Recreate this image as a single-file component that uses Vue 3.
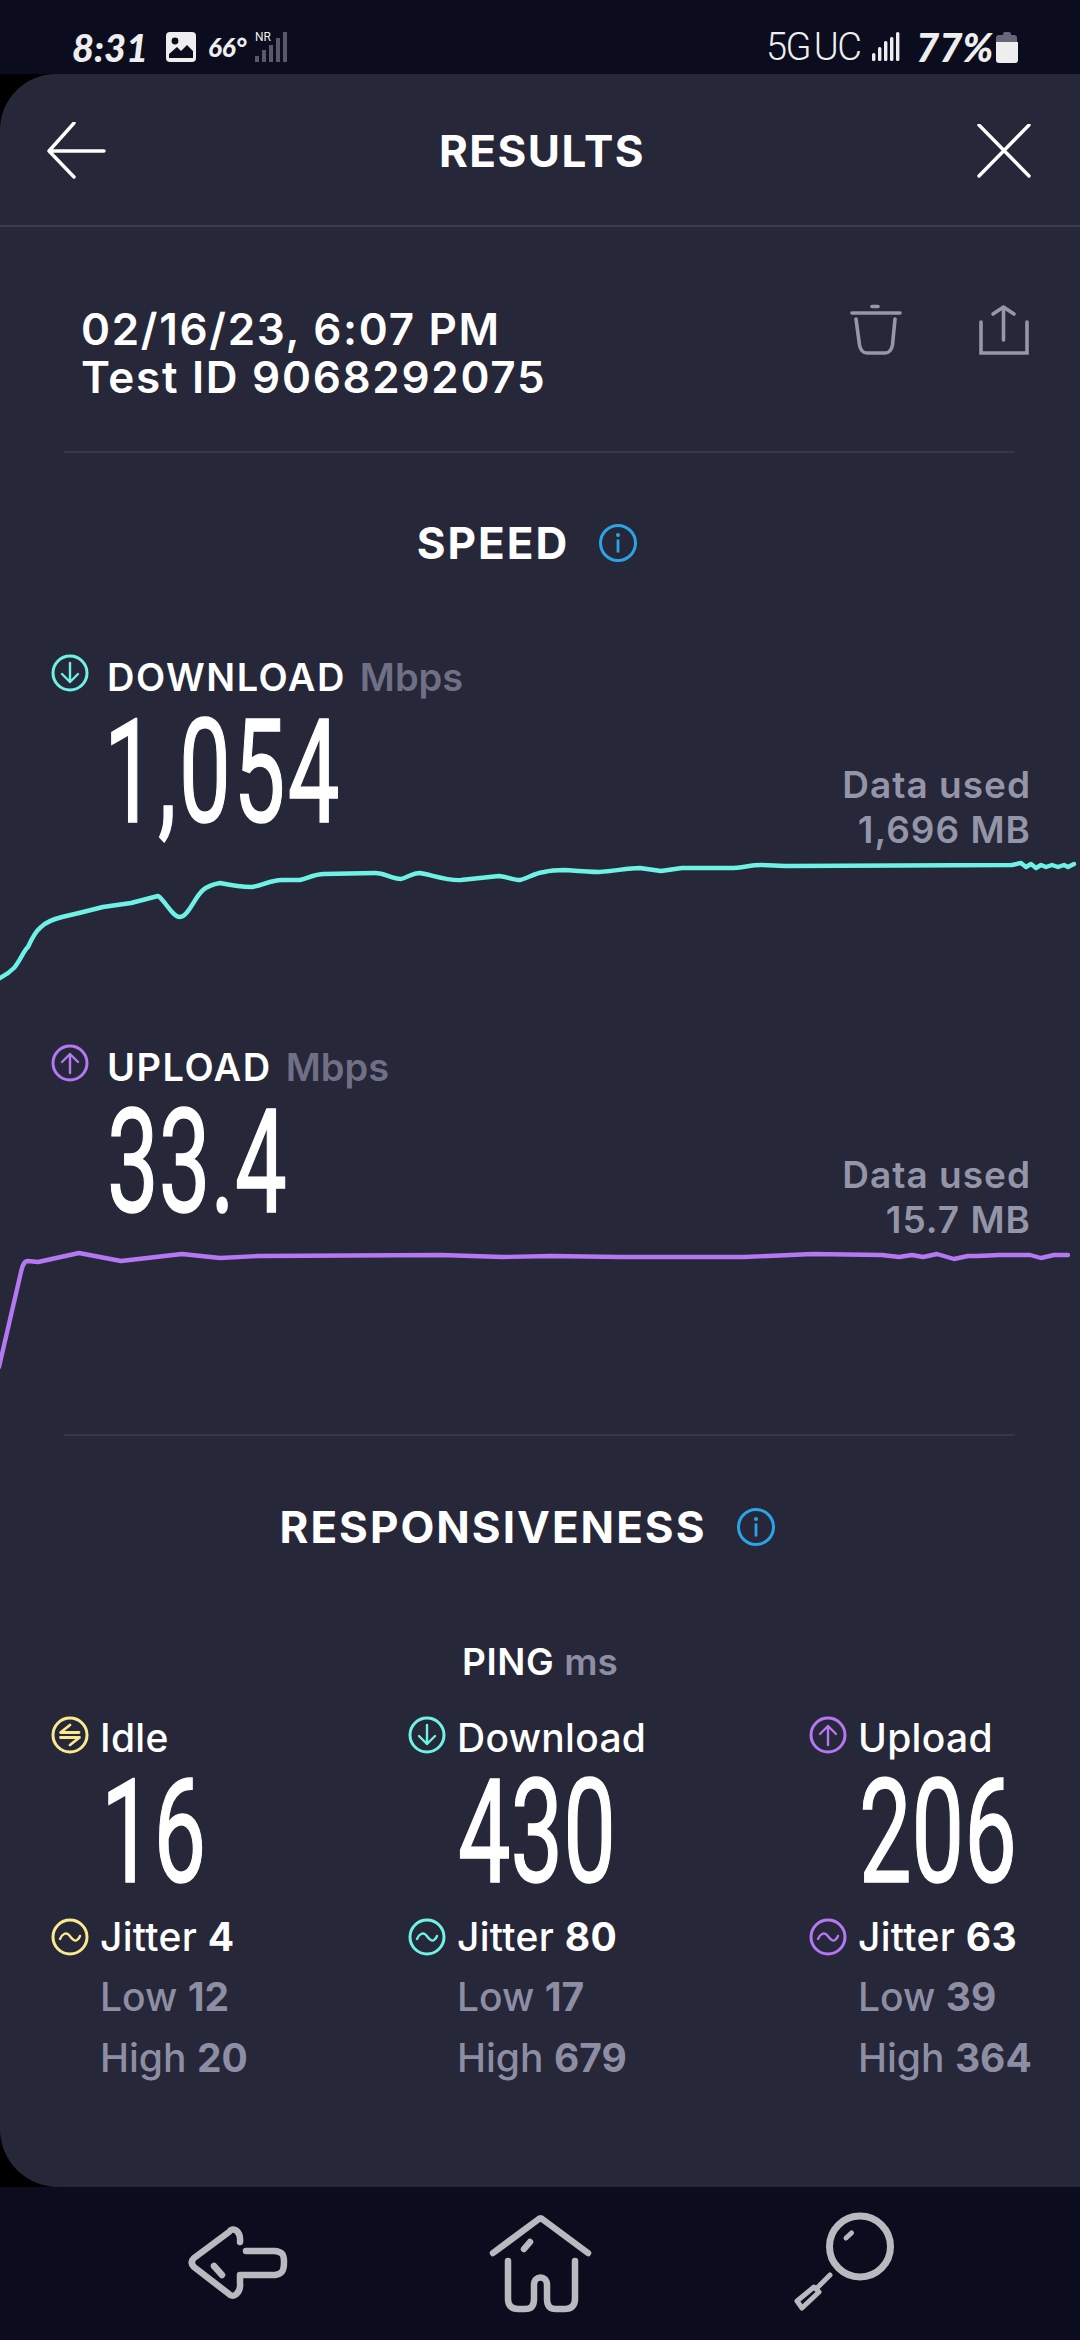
<script setup>
const columns = [
  { id: 'idle', label: 'Idle', value: '16', jitter: '4', low: '12', high: '20', color: '#fbe98f', kind: 'idle' },
  { id: 'down', label: 'Download', value: '430', jitter: '80', low: '17', high: '679', color: '#6ff2e6', kind: 'down' },
  { id: 'up', label: 'Upload', value: '206', jitter: '63', low: '39', high: '364', color: '#b577f2', kind: 'up' }
]
const downloadLine = 'M-2 979 L0 978 C6 975 10 972 14 968 C20 961 24 950 28 947 C32 938 36 931 41 927 C47 921 54 919 62 917 L79 913 L103 907 L131 903 L158 896 C165 900 172 917 180 917 C188 917 194 898 203 890 C208 886 214 884 220 883 C230 885 240 887 251 887 C262 886 270 880 282 880 L300 880 C308 878 315 874 324 874 L375 873 C385 873 392 879 401 879 C408 877 413 873 420 873 C432 875 448 881 461 880 L499 876 C508 877 514 880 520 880 C528 878 535 873 544 872 C552 870 558 870 565 870 C578 871 590 872 599 872 C615 871 628 868 640 868 L661 871 L682 868 L730 868 C742 868 750 865 761 865 L785 866 L1012 865 L1021 863 L1026 867 L1031 864 L1036 868 L1041 865 L1046 867 L1052 865 L1058 867 L1064 865 L1068 867 L1074 864'
const uploadLine = 'M-1 1367 L21 1272 C23 1263 25 1261 28 1261 L38 1262 L79 1253 L121 1261 L182 1254 L220 1258 L258 1256 L441 1255 L503 1257 L551 1256 L620 1257 L744 1257 L813 1254 L882 1255 L899 1257 L912 1255 L923 1257 L937 1254 L954 1259 L968 1256 L978 1256 L999 1255 L1030 1255 L1041 1258 L1054 1255 L1068 1255'
</script>

<template>
  <div class="page">
    <header class="status">
      <div class="status-left">
        <span class="clock">8:31</span>
        <svg class="photo" viewBox="0 0 30 30" width="30" height="30">
          <rect width="30" height="30" rx="4" fill="#eeeeef" />
          <circle cx="9" cy="9" r="3.4" fill="#0b0c1d" />
          <path d="M3 26 V22 L11 15 L15 19 L21 13 L27 19 V26 Z" fill="#0b0c1d" />
        </svg>
        <span class="temp">66°</span>
        <div class="nr">
          <span class="nr-label">NR</span>
          <svg width="36" height="30" viewBox="0 0 36 30">
            <g fill="#57586a">
              <rect x="0" y="24" width="4" height="6" />
              <rect x="7" y="18" width="4" height="12" />
              <rect x="14" y="13" width="4" height="17" />
              <rect x="21" y="6" width="4" height="24" />
              <rect x="28" y="0" width="4" height="30" />
            </g>
          </svg>
        </div>
      </div>
      <div class="status-right">
        <span class="net">5G UC</span>
        <svg class="bars" width="28" height="30" viewBox="0 0 28 30">
          <g fill="#eeeeef">
            <rect x="0" y="21" width="3.4" height="8" rx="1.5" />
            <rect x="6" y="15" width="3.4" height="14" rx="1.5" />
            <rect x="12" y="9" width="3.4" height="20" rx="1.5" />
            <rect x="18" y="5" width="3.4" height="24" rx="1.5" />
            <rect x="24" y="0" width="3.4" height="29" rx="1.5" />
          </g>
        </svg>
        <span class="pct">77%</span>
        <svg width="22" height="33" viewBox="0 0 22 33">
          <path d="M7 3 a2 2 0 0 1 2 -2 h4 a2 2 0 0 1 2 2 V4 h3 a3 3 0 0 1 3 3 V11 H0 V7 a3 3 0 0 1 3 -3 h4 Z" fill="#66677a" />
          <path d="M0 11 H22 V29 a3 3 0 0 1 -3 3 H3 a3 3 0 0 1 -3 -3 Z" fill="#eeeeef" />
        </svg>
      </div>
    </header>

    <div class="backdrop">
      <main class="card">
        <div class="topbar">
          <svg width="60" height="58" viewBox="0 0 60 58" class="topbar-icon">
            <path d="M27 1 L2 29 L27 55 M2 29 H57" fill="none" stroke="#fff" stroke-width="3.4" stroke-linecap="round" stroke-linejoin="round" />
          </svg>
          <h1 class="title">RESULTS</h1>
          <svg width="54" height="54" viewBox="0 0 54 54" class="topbar-icon">
            <path d="M2 1 L52 52 M52 1 L2 52" fill="none" stroke="#fff" stroke-width="3.4" stroke-linecap="round" />
          </svg>
        </div>

        <section class="meta">
          <div class="meta-text">
            <div>02/16/23, 6:07 PM</div>
            <div>Test ID 9068292075</div>
          </div>
          <div class="meta-actions">
            <svg width="52" height="54" viewBox="0 0 52 54">
              <g fill="none" stroke="#9697ab" stroke-width="3.6" stroke-linecap="round">
                <path d="M2 9 H50" />
                <path d="M22 2.5 H28" />
                <path d="M6 15 L9.5 41 C10.5 46 13 49 17 49 H35 C39 49 41.5 46 42.5 41 L45 15" />
              </g>
            </svg>
            <svg width="52" height="54" viewBox="0 0 52 54">
              <g fill="none" stroke="#9697ab" stroke-width="3.6" stroke-linecap="round">
                <path d="M3 18 V49 H49 V18" stroke-linejoin="miter" />
                <path d="M25.5 36 V3 M15 10 L25.5 3 L36 10" stroke-linejoin="round" />
              </g>
            </svg>
          </div>
        </section>

        <div class="rule"></div>

        <h2 class="section-title speed-title">
          <span>SPEED</span>
          <svg class="info" width="40" height="40" viewBox="0 0 40 40">
            <circle cx="20" cy="20" r="17.5" fill="none" stroke="#2aa4e6" stroke-width="3" />
            <rect x="18.6" y="16.5" width="2.8" height="13" fill="#2aa4e6" />
            <circle cx="20" cy="12" r="2" fill="#2aa4e6" />
          </svg>
        </h2>

        <section class="metric download">
          <div class="metric-head">
            <svg class="ring" width="38" height="38" viewBox="0 0 38 38">
              <g fill="none" stroke="#6ff2e6" stroke-linecap="round" stroke-linejoin="round">
                <circle cx="19" cy="19" r="17" stroke-width="3" />
                <path d="M19 9 V28 M11 20 L19 28 L27 20" stroke-width="2.4" />
              </g>
            </svg>
            <span class="metric-name">DOWNLOAD</span>
            <span class="metric-unit">Mbps</span>
          </div>
          <div class="metric-main">
            <span class="big big-metric">1,054</span>
            <div class="used"><div>Data used</div><div>1,696 MB</div></div>
          </div>
          <svg class="chart" width="1080" height="140" viewBox="0 850 1080 140">
            <path :d="downloadLine" fill="none" stroke="#6ff2e6" stroke-width="4.4" stroke-linejoin="round" stroke-linecap="round" />
          </svg>
        </section>

        <section class="metric upload">
          <div class="metric-head">
            <svg class="ring" width="38" height="38" viewBox="0 0 38 38">
              <g fill="none" stroke="#b577f2" stroke-linecap="round" stroke-linejoin="round">
                <circle cx="19" cy="19" r="17" stroke-width="3" />
                <path d="M19 29 V10 M11 18 L19 10 L27 18" stroke-width="2.4" />
              </g>
            </svg>
            <span class="metric-name">UPLOAD</span>
            <span class="metric-unit">Mbps</span>
          </div>
          <div class="metric-main">
            <span class="big big-metric">33.4</span>
            <div class="used"><div>Data used</div><div>15.7 MB</div></div>
          </div>
          <svg class="chart" width="1080" height="130" viewBox="0 1240 1080 130">
            <path :d="uploadLine" fill="none" stroke="#b577f2" stroke-width="4.4" stroke-linejoin="round" stroke-linecap="round" />
          </svg>
        </section>

        <div class="rule rule-two"></div>

        <h2 class="section-title resp-title">
          <span>RESPONSIVENESS</span>
          <svg class="info" width="40" height="40" viewBox="0 0 40 40">
            <circle cx="20" cy="20" r="17.5" fill="none" stroke="#2aa4e6" stroke-width="3" />
            <rect x="18.6" y="16.5" width="2.8" height="13" fill="#2aa4e6" />
            <circle cx="20" cy="12" r="2" fill="#2aa4e6" />
          </svg>
        </h2>

        <div class="ping-title">PING <span class="ping-unit">ms</span></div>

        <section class="ping">
          <div v-for="c in columns" :key="c.id" class="ping-col" :class="'col-' + c.id">
            <div class="ping-row">
              <svg class="ring" width="38" height="38" viewBox="0 0 38 38">
                <g fill="none" :stroke="c.color" stroke-linecap="round" stroke-linejoin="round">
                  <circle cx="19" cy="19" r="17" stroke-width="3" />
                  <path v-if="c.kind === 'idle'" d="M28 16.5 H9.5 L19 9 M9.5 21.5 H28.5 L19 29" stroke-width="2.8" />
                  <path v-else-if="c.kind === 'down'" d="M19 9 V28 M11 20 L19 28 L27 20" stroke-width="2.4" />
                  <path v-else d="M19 29 V10 M11 18 L19 10 L27 18" stroke-width="2.4" />
                </g>
              </svg>
              <span class="ping-label">{{ c.label }}</span>
            </div>
            <div class="big big-ping">{{ c.value }}</div>
            <div class="ping-row jitter">
              <svg class="ring" width="38" height="38" viewBox="0 0 38 38">
                <g fill="none" :stroke="c.color" stroke-linecap="round">
                  <circle cx="19" cy="19" r="17" stroke-width="3" />
                  <path d="M9 21 C11 16 15 14 18 17 C21 21 24 24 26 22 C27.5 21 28.5 19.5 29 18" stroke-width="2.4" />
                </g>
              </svg>
              <span class="ping-label">Jitter <b>{{ c.jitter }}</b></span>
            </div>
            <div class="stat">Low <b>{{ c.low }}</b></div>
            <div class="stat stat-high">High <b>{{ c.high }}</b></div>
          </div>
        </section>
      </main>
    </div>

    <nav class="nav">
      <svg width="110" height="110" viewBox="0 -6 110 110">
        <g fill="none" stroke="#b9bac0" stroke-width="6.5" stroke-linecap="round" stroke-linejoin="round">
          <path d="M55 29 C56 18 48 13 44 19 L9 45 C6 48 6 51 9 54 L44 81 C48 86 56 80 55 70 V62 H90 C97 61 99 58 99 49 C99 41 97 39 90 38 H61" />
          <path d="M29 53 L37 62" />
        </g>
      </svg>
      <svg width="110" height="110" viewBox="0 -6 110 110">
        <g fill="none" stroke="#b9bac0" stroke-width="6.5" stroke-linecap="round" stroke-linejoin="round">
          <path d="M8 40 L52.5 7 Q55.5 4 58.5 7 L103 40" />
          <path d="M23 48 V86 C23 93 27 96 33 96 H40 C46 96 49 93 49 86 V72 C49 62 62 62 62 72 V86 C62 93 65 96 71 96 H80 C86 96 90 93 90 86 V48" />
          <path d="M39 36 L45 29" />
        </g>
      </svg>
      <svg width="110" height="110" viewBox="0 -6 110 110">
        <g fill="none" stroke="#b9bac0" stroke-width="7" stroke-linecap="round" stroke-linejoin="round">
          <circle cx="75" cy="33.5" r="30.5" />
          <path d="M45 62 L33 74" stroke-width="5" />
          <path d="M29 74 L12 88 L17 95 L34 79 Z" stroke-width="5" />
          <path d="M61 25 L66.5 20" stroke-width="5" />
        </g>
      </svg>
    </nav>
  </div>
</template>

<style>
html, body { margin: 0; background: #0b0c1d; }
</style>

<style scoped>
.page {
  width: 1080px;
  height: 2340px;
  background: #0b0c1d;
  color: #fff;
  font-family: Inter, "Liberation Sans", sans-serif;
  overflow: hidden;
  display: flex;
  flex-direction: column;
}
.status {
  height: 74px;
  flex: none;
  box-sizing: border-box;
  padding: 30px 62px 0 72px;
  display: flex;
  justify-content: space-between;
  align-items: flex-start;
  color: #eeeeef;
}
.status-left, .status-right { display: flex; align-items: center; height: 34px; }
.clock { font: italic 900 38px/34px Lato, sans-serif; width: 94px; }
.temp { font: italic 900 26px/34px Lato, sans-serif; margin-left: 12px; width: 47px; }
.nr { position: relative; width: 36px; height: 30px; }
.nr-label { position: absolute; left: 0; top: -1px; font: 400 12px/12px Roboto, sans-serif; color: #eeeeef; z-index: 1; background: #0b0c1d; padding-right: 1px; }
.net { font: 300 38px/34px Roboto, sans-serif; width: 106px; letter-spacing: -1.5px; word-spacing: -4px; white-space: nowrap; }
.pct { font: italic 900 40px/34px Lato, sans-serif; margin-left: 16px; width: 80px; }
.backdrop { background: #000; flex: none; }
.card {
  height: 2113px;
  box-sizing: border-box;
  background: #262739;
  border-radius: 56px 0 0 58px;
  overflow: hidden;
}
.topbar {
  height: 153px;
  box-sizing: border-box;
  border-bottom: 2px solid #3b3c4e;
  padding: 2px 49px 0 47px;
  display: flex;
  align-items: center;
  justify-content: space-between;
}
.title { margin: 0; font-size: 44px; line-height: 50px; font-weight: 700; letter-spacing: 1.5px; }
.meta {
  display: flex;
  justify-content: space-between;
  padding: 78px 50px 0 81px;
}
.meta-text { font-size: 44px; line-height: 48px; font-weight: 600; letter-spacing: 1.7px; }
.meta-actions { display: flex; gap: 76px; margin-top: -1px; }
.rule { height: 2px; margin: 50px 65px 0 64px; background: #353648; }
.section-title {
  margin: 0;
  padding-right: 25px;
  font-size: 44px;
  line-height: 50px;
  font-weight: 700;
  letter-spacing: 2px;
  display: flex;
  justify-content: center;
  align-items: center;
  gap: 29px;
}
.speed-title { margin-top: 65px; }
.info { flex: none; }
.metric-head { display: flex; align-items: flex-start; padding-left: 51px; height: 44px; }
.ring { flex: none; }
.metric-name { margin-left: 18px; margin-top: 3px; font-size: 38px; line-height: 40px; font-weight: 600; letter-spacing: 1.5px; }
.metric-unit { margin-left: 14px; margin-top: 3px; font-size: 38px; line-height: 40px; font-weight: 600; color: #6f7085; }
.download { margin-top: 86px; }
.upload { margin-top: 54px; }
.metric-main { display: flex; justify-content: space-between; padding: 10px 49px 0 107px; height: 152px; box-sizing: border-box; }
.big {
  font-family: Roboto, sans-serif;
  font-weight: 400;
  -webkit-text-stroke: 1.5px #fff;
  display: inline-block;
  transform: scaleX(0.64);
  transform-origin: left center;
  white-space: nowrap;
}
.big-metric { font-size: 144px; line-height: 130px; height: 130px; }
.download .big-metric { letter-spacing: 4px; margin-left: -3px; }
.used { text-align: right; font-size: 37px; line-height: 45px; font-weight: 600; letter-spacing: 1px; color: #9495a8; padding-top: 54px; }
.chart { display: block; }
.rule-two { margin-top: 64px; }
.resp-title { margin-top: 66px; }
.ping-title { margin-top: 90px; text-align: center; font-size: 37px; line-height: 40px; font-weight: 600; letter-spacing: 0.6px; }
.ping-unit { color: #8d8ea3; letter-spacing: 0; }
.ping { display: flex; padding: 0 0 0 51px; margin-top: 34px; }
.ping-col { flex: none; }
.col-idle { width: 357px; }
.col-down { width: 401px; }
.ping-row { display: flex; align-items: flex-start; height: 40px; }
.ping-label { margin-left: 11px; margin-top: 2px; font-size: 39px; line-height: 40px; font-weight: 500; letter-spacing: 0.3px; white-space: nowrap; }
.ping-label b { font-weight: 700; }
.big-ping { display: block; font-size: 144px; line-height: 130px; height: 130px; margin-top: 12px; margin-left: 50px; transform: scaleX(0.65); }
.jitter { margin-top: 20px; }
.jitter .ping-label { margin-top: -1px; }
.stat { margin-left: 49px; margin-top: 19px; font-size: 39px; line-height: 40px; font-weight: 500; color: #8d8ea3; white-space: nowrap; }
.stat-high { margin-top: 21px; }
.stat b { font-weight: 700; }
.nav { flex: 1; display: flex; align-items: flex-start; justify-content: center; gap: 190px; padding-top: 20px; }
</style>
